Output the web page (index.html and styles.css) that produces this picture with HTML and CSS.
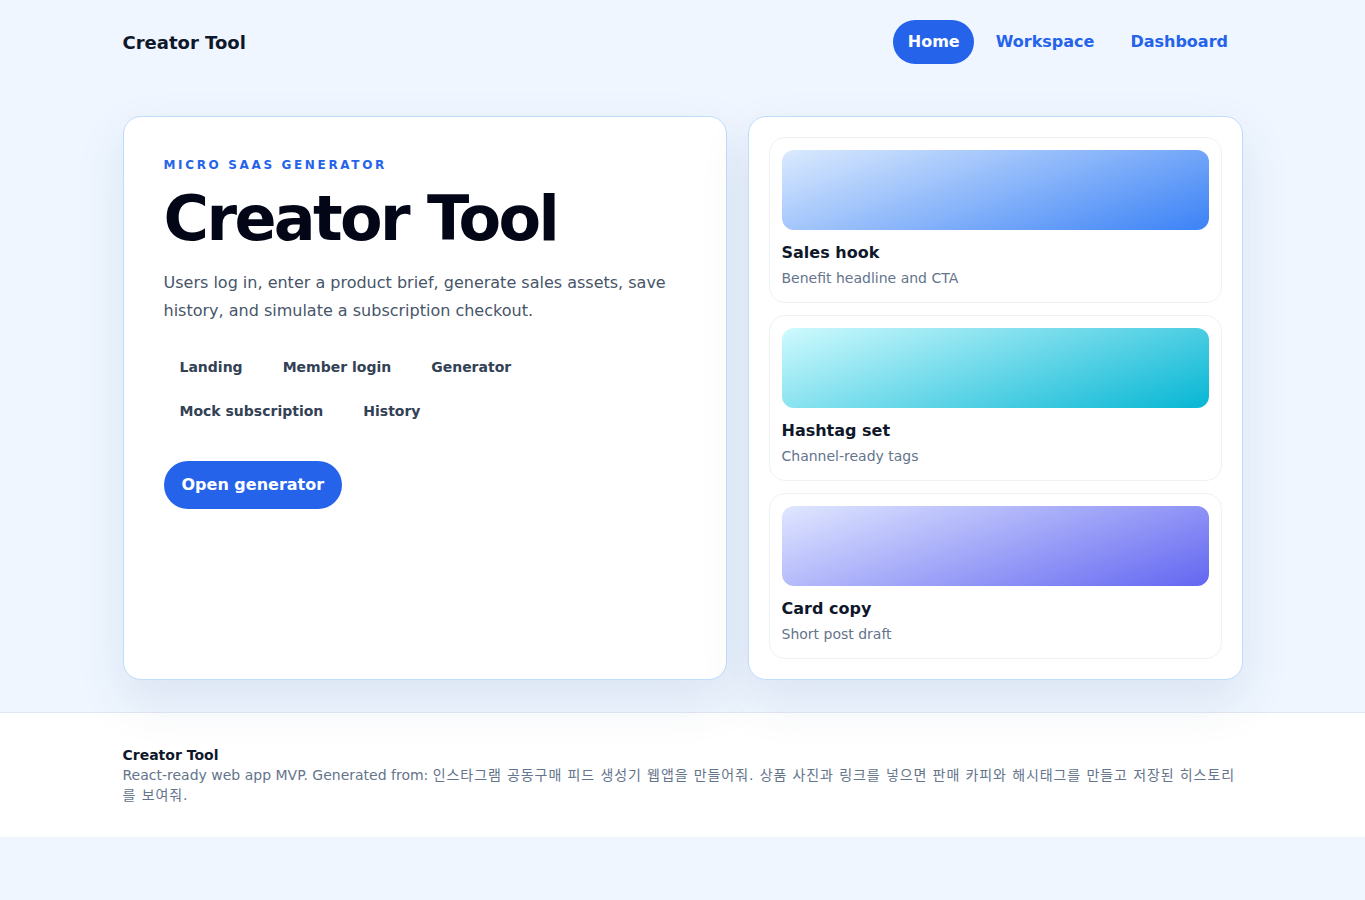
FILE: index.html
```html
<!DOCTYPE html>
<html lang="en">
<head>
    <meta charset="UTF-8">
    <meta name="viewport" content="width=device-width, initial-scale=1.0">
    <title>Creator Tool</title>
    <link rel="stylesheet" href="styles.css">
</head>
<body>
    <header class="topbar">
        <div class="wrap topbar-inner">
            <div class="brand">Creator Tool</div>
            <nav class="nav">
                <a class="nav-link active" href="#">Home</a>
                <a class="nav-link" href="#">Workspace</a>
                <a class="nav-link" href="#">Dashboard</a>
            </nav>
        </div>
    </header>

    <main class="wrap hero">
        <section class="panel intro">
            <p class="eyebrow">Micro SaaS generator</p>
            <h1>Creator Tool</h1>
            <p class="lead">Users log in, enter a product brief, generate sales assets, save history, and simulate a subscription checkout.</p>
            <div class="tags">
                <span class="tag">Landing</span>
                <span class="tag">Member login</span>
                <span class="tag">Generator</span>
                <span class="tag">Mock subscription</span>
                <span class="tag">History</span>
            </div>
            <a class="cta" href="#">Open generator</a>
        </section>

        <aside class="panel previews">
            <div class="preview">
                <div class="swatch blue"></div>
                <h3>Sales hook</h3>
                <p>Benefit headline and CTA</p>
            </div>
            <div class="preview">
                <div class="swatch cyan"></div>
                <h3>Hashtag set</h3>
                <p>Channel-ready tags</p>
            </div>
            <div class="preview">
                <div class="swatch indigo"></div>
                <h3>Card copy</h3>
                <p>Short post draft</p>
            </div>
        </aside>
    </main>

    <footer class="footer">
        <div class="wrap">
            <strong>Creator Tool</strong>
            <p>React-ready web app MVP. Generated from: <span class="prompt" lang="ko">인스타그램 공동구매 피드 생성기 웹앱을 만들어줘. 상품 사진과 링크를 넣으면 판매 카피와 해시태그를 만들고 저장된 히스토리를 보여줘.</span></p>
        </div>
    </footer>
</body>
</html>
```

FILE: styles.css
```css
* {
    box-sizing: border-box;
    margin: 0;
    padding: 0;
}
body {
    font-family: 'DejaVu Sans', 'Noto Sans CJK KR', sans-serif;
    color: #0f172a;
    background-color: #eff6ff;
}
a {
    text-decoration: none;
}
.wrap {
    max-width: 1120px;
    margin: 0 auto;
}
.topbar {
    padding: 20px 0;
}
.topbar-inner {
    display: flex;
    align-items: center;
    justify-content: space-between;
}
.brand {
    font-size: 18px;
    font-weight: 700;
}
.nav {
    display: flex;
    gap: 7px;
}
.nav-link {
    display: block;
    height: 44px;
    line-height: 44px;
    padding: 0 14.5px;
    border-radius: 999px;
    font-size: 16px;
    font-weight: 700;
    color: #2563eb;
}
.nav-link.active {
    background-color: #2563eb;
    color: #fff;
}
.hero {
    display: grid;
    grid-template-columns: 604px 1fr;
    gap: 21px;
    margin-top: 32px;
    margin-bottom: 32px;
}
.panel {
    background-color: #fff;
    border: 1px solid #bfdbfe;
    border-radius: 18px;
    box-shadow: 0 20px 50px rgba(30, 64, 120, 0.1);
}
.intro {
    padding: 40px;
}
.eyebrow {
    font-size: 12px;
    font-weight: 700;
    letter-spacing: 2.65px;
    text-transform: uppercase;
    color: #2563eb;
    line-height: 16px;
}
.intro h1 {
    font-size: 62px;
    line-height: 72px;
    font-weight: 700;
    letter-spacing: -2.6px;
    color: #020617;
    margin-top: 10px;
}
.lead {
    margin-top: 14px;
    font-size: 16px;
    line-height: 28px;
    color: #475569;
}
.tags {
    display: flex;
    flex-wrap: wrap;
    gap: 8px;
    margin-top: 24px;
}
.tag {
    display: block;
    height: 36px;
    line-height: 36px;
    padding: 0 16px;
    border-radius: 999px;
    background-color: #fff;
    font-size: 14px;
    font-weight: 700;
    color: #334155;
}
.cta {
    display: inline-block;
    margin-top: 32px;
    height: 48px;
    line-height: 48px;
    padding: 0 18px;
    border-radius: 999px;
    background-color: #2563eb;
    color: #fff;
    font-size: 16px;
    font-weight: 700;
}
.previews {
    padding: 20px;
    display: flex;
    flex-direction: column;
    gap: 12px;
}
.preview {
    border: 1px solid #eef2f7;
    border-radius: 16px;
    padding: 12px 12px 13px;
}
.swatch {
    height: 80px;
    border-radius: 12px;
}
.swatch.blue {
    background: linear-gradient(160deg, #dbeafe, #3b82f6);
}
.swatch.cyan {
    background: linear-gradient(160deg, #cffafe, #06b6d4);
}
.swatch.indigo {
    background: linear-gradient(160deg, #e0e7ff, #6366f1);
}
.preview h3 {
    margin-top: 12px;
    font-size: 16px;
    line-height: 22px;
    color: #0f172a;
}
.preview p {
    margin-top: 3px;
    font-size: 14px;
    line-height: 22px;
    color: #64748b;
}
.footer {
    background-color: #fff;
    border-top: 1px solid #e2e8f0;
    padding: 32px 0;
    font-size: 14px;
    line-height: 20px;
}
.footer strong {
    display: block;
    color: #0f172a;
}
.footer p {
    color: #64748b;
}
.prompt {
    letter-spacing: 0.9px;
}
```
